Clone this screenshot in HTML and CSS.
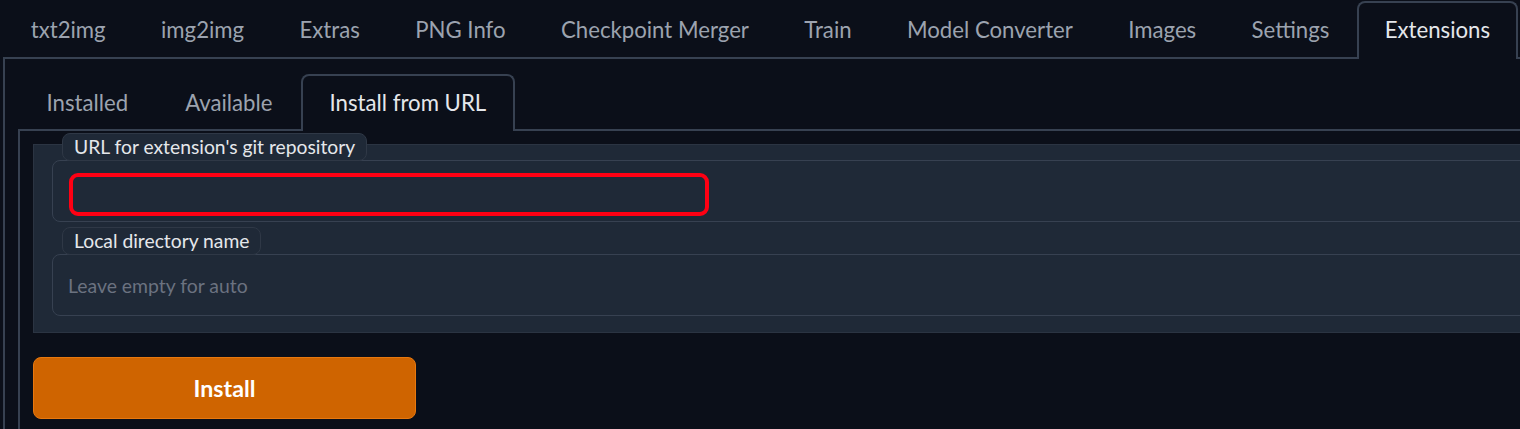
FILE: index.html
```html
<!DOCTYPE html>
<html lang="en">
<head>
<meta charset="utf-8">
<title>Extensions</title>
<link rel="stylesheet" href="styles.css">
</head>
<body>
<div class="app">
  <nav class="tabs-nav top-nav">
    <button class="tab">txt2img</button>
    <button class="tab">img2img</button>
    <button class="tab">Extras</button>
    <button class="tab">PNG Info</button>
    <button class="tab">Checkpoint Merger</button>
    <button class="tab">Train</button>
    <button class="tab">Model Converter</button>
    <button class="tab">Images</button>
    <button class="tab">Settings</button>
    <button class="tab selected">Extensions</button>
  </nav>
  <div class="tab-panel outer-panel">
    <nav class="tabs-nav sub-nav">
      <button class="tab">Installed</button>
      <button class="tab">Available</button>
      <button class="tab selected">Install from URL</button>
    </nav>
    <div class="tab-panel inner-panel">
      <div class="block">
        <label class="field">
          <span class="field-label">URL for extension's git repository</span>
          <span class="input-wrap">
            <input class="text-input" type="text">
            <span class="highlight"></span>
          </span>
        </label>
        <label class="field">
          <span class="field-label">Local directory name</span>
          <span class="input-wrap">
            <input class="text-input" type="text" placeholder="Leave empty for auto">
          </span>
        </label>
      </div>
      <button class="install-btn">Install</button>
    </div>
  </div>
</div>
</body>
</html>
```
FILE: styles.css
```css
* { box-sizing: border-box; }
html, body { margin: 0; padding: 0; }
body {
  background: #0b0f19;
  overflow: hidden;
  font-family: "Lato", "Noto Sans", sans-serif;
  color: #e5e7eb;
}
.app {
  width: 1580px;
  padding-left: 3px;
}
.tabs-nav {
  display: flex;
  align-items: flex-end;
  border-bottom: 2px solid #374151;
  height: 59px;
}
.tab {
  font-family: inherit;
  font-size: 22.2px;
  color: #9ca3af;
  background: transparent;
  border: 2px solid transparent;
  border-bottom: none;
  border-radius: 8px 8px 0 0;
  padding: 0 25.7px 3px;
  height: 58px;
  margin-bottom: -2px;
  cursor: pointer;
}
.tab.selected {
  color: #e5e7eb;
  background: #0b0f19;
  border-color: #374151;
}
.tab-panel {
  border-left: 2px solid #374151;
}
.outer-panel {
  padding: 13px 0 0 13px;
  min-height: 370px;
}
.sub-nav .tab {
  height: 57px;
  padding: 0 26.5px 3px;
}
.inner-panel {
  padding: 13px 0 20px 13px;
}
.block {
  background: #1f2937;
  border: 1px solid #2b3442;
  padding: 0 0 16px 18px;
  display: flex;
  flex-direction: column;
}
.field {
  display: flex;
  flex-direction: column;
  align-items: flex-start;
}
.field:first-child { margin-top: -12px; }
.field + .field { margin-top: 5px; }
.field-label {
  font-size: 19.3px;
  color: #e5e7eb;
  background: #1f2937;
  border: 1px solid #2f3846;
  border-radius: 8px;
  padding: 0 11px;
  height: 28px;
  line-height: 25px;
  margin-left: 10px;
  margin-bottom: -1px;
  position: relative;
  z-index: 1;
}
.input-wrap {
  position: relative;
  display: block;
  align-self: stretch;
}
.text-input {
  display: block;
  width: 100%;
  height: 62px;
  background: #1f2937;
  border: 1px solid #374151;
  border-radius: 8px;
  padding: 0 15px;
  font-family: inherit;
  font-size: 19.4px;
  color: #e5e7eb;
  outline: none;
}
.text-input::placeholder { color: #6b7280; }
.highlight {
  position: absolute;
  left: 17px;
  top: 13px;
  width: 640px;
  height: 43px;
  border: 4px solid #ff0013;
  border-radius: 9px;
  pointer-events: none;
}
.install-btn {
  margin-top: 24px;
  width: 383px;
  height: 62px;
  background: #cf6400;
  border: 1px solid #e8780e;
  border-radius: 8px;
  color: #ffffff;
  font-family: inherit;
  font-weight: 700;
  font-size: 23.2px;
  cursor: pointer;
}
```
